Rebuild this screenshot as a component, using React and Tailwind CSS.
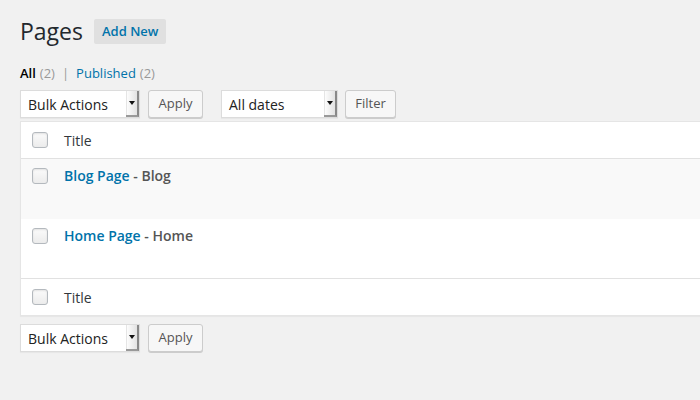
import React from "react";

function Checkbox() {
  return (
    <span className="block w-[16px] h-[16px] rounded-[3px] border border-[#b4b9be] bg-[linear-gradient(#fbfbfb,#ececec)] shadow-[inset_0_1px_2px_rgba(0,0,0,0.1)]" />
  );
}

function Select({ label, width }) {
  return (
    <div
      className={`flex items-stretch h-[28px] bg-white border border-[#dcdcdc] shadow-[0_1px_1px_rgba(0,0,0,0.04)] ${width}`}
    >
      <span className="flex-1 flex items-center pl-[7px] text-[14px] text-[#222]">{label}</span>
      <span className="w-[13px] flex items-center justify-center bg-[linear-gradient(90deg,#ffffff,#e2e2e2)] border-r-[2px] border-b-[2px] border-r-[#888] border-b-[#999] shadow-[inset_1px_0_0_#e5e5e5]">
        <span className="block w-0 h-0 border-l-[3px] border-r-[3px] border-t-[4px] border-l-transparent border-r-transparent border-t-[#111]" />
      </span>
    </div>
  );
}

function Button({ label, width }) {
  return (
    <button
      className={`h-[28px] ${width} rounded-[3px] border border-[#cccccc] bg-[#f7f7f7] shadow-[0_1px_0_#cccccc] text-[13px] text-[#555] flex items-center justify-center`}
    >
      {label}
    </button>
  );
}

export default function App() {
  return (
    <div
      className="w-[700px] h-[400px] overflow-hidden bg-[#f1f1f1] pl-[20px] text-[#444]"
      style={{ fontFamily: '"Open Sans", "Noto Sans", sans-serif' }}
    >
      <div className="flex items-center pt-[19px] h-[44px]">
        <h1 className="text-[23px] leading-[25px] text-[#23282d] font-normal mr-[11px] -mt-[1px]">Pages</h1>
        <span className="h-[25px] px-[8px] flex items-center bg-[#e0e0e0] rounded-[2px] text-[13px] font-semibold text-[#0073aa]">
          Add New
        </span>
      </div>

      <div className="mt-[20px] h-[18px] flex items-center text-[13px] leading-[18px]">
        <span className="text-[#000] font-semibold">All</span>
        <span className="text-[#999] ml-[4px]">(2)</span>
        <span className="text-[#999] mx-[7px]">|</span>
        <span className="text-[#0073aa]">Published</span>
        <span className="text-[#999] ml-[4px]">(2)</span>
      </div>

      <div className="mt-[8px] flex items-center h-[28px]">
        <Select label="Bulk Actions" width="w-[120px]" />
        <div className="ml-[8px]">
          <Button label="Apply" width="w-[55px]" />
        </div>
        <div className="ml-[18px]">
          <Select label="All dates" width="w-[117px]" />
        </div>
        <div className="ml-[7px]">
          <Button label="Filter" width="w-[51px]" />
        </div>
      </div>

      <div className="mt-[3px] w-[700px] bg-white border border-[#e5e5e5] shadow-[0_1px_1px_rgba(0,0,0,0.04)]">
        <div className="h-[37px] flex items-center border-b border-[#e1e1e1]">
          <div className="w-[43px] flex justify-start pl-[11px]">
            <Checkbox />
          </div>
          <span className="text-[14px] text-[#32373c]">Title</span>
        </div>
        <div className="h-[60px] bg-[#f9f9f9] flex items-start pt-[8px]">
          <div className="w-[43px] flex justify-start pl-[11px] pt-[1px]">
            <Checkbox />
          </div>
          <span className="text-[14px] leading-[18px] font-semibold text-[#555]">
            <span className="text-[#0073aa]">Blog Page</span> - Blog
          </span>
        </div>
        <div className="h-[60px] bg-white flex items-start pt-[8px] border-b border-[#e1e1e1]">
          <div className="w-[43px] flex justify-start pl-[11px] pt-[1px]">
            <Checkbox />
          </div>
          <span className="text-[14px] leading-[18px] font-semibold text-[#555]">
            <span className="text-[#0073aa]">Home Page</span> - Home
          </span>
        </div>
        <div className="h-[36px] flex items-center">
          <div className="w-[43px] flex justify-start pl-[11px]">
            <Checkbox />
          </div>
          <span className="text-[14px] text-[#32373c]">Title</span>
        </div>
      </div>

      <div className="mt-[8px] flex items-center h-[28px]">
        <Select label="Bulk Actions" width="w-[120px]" />
        <div className="ml-[8px]">
          <Button label="Apply" width="w-[55px]" />
        </div>
      </div>
    </div>
  );
}
